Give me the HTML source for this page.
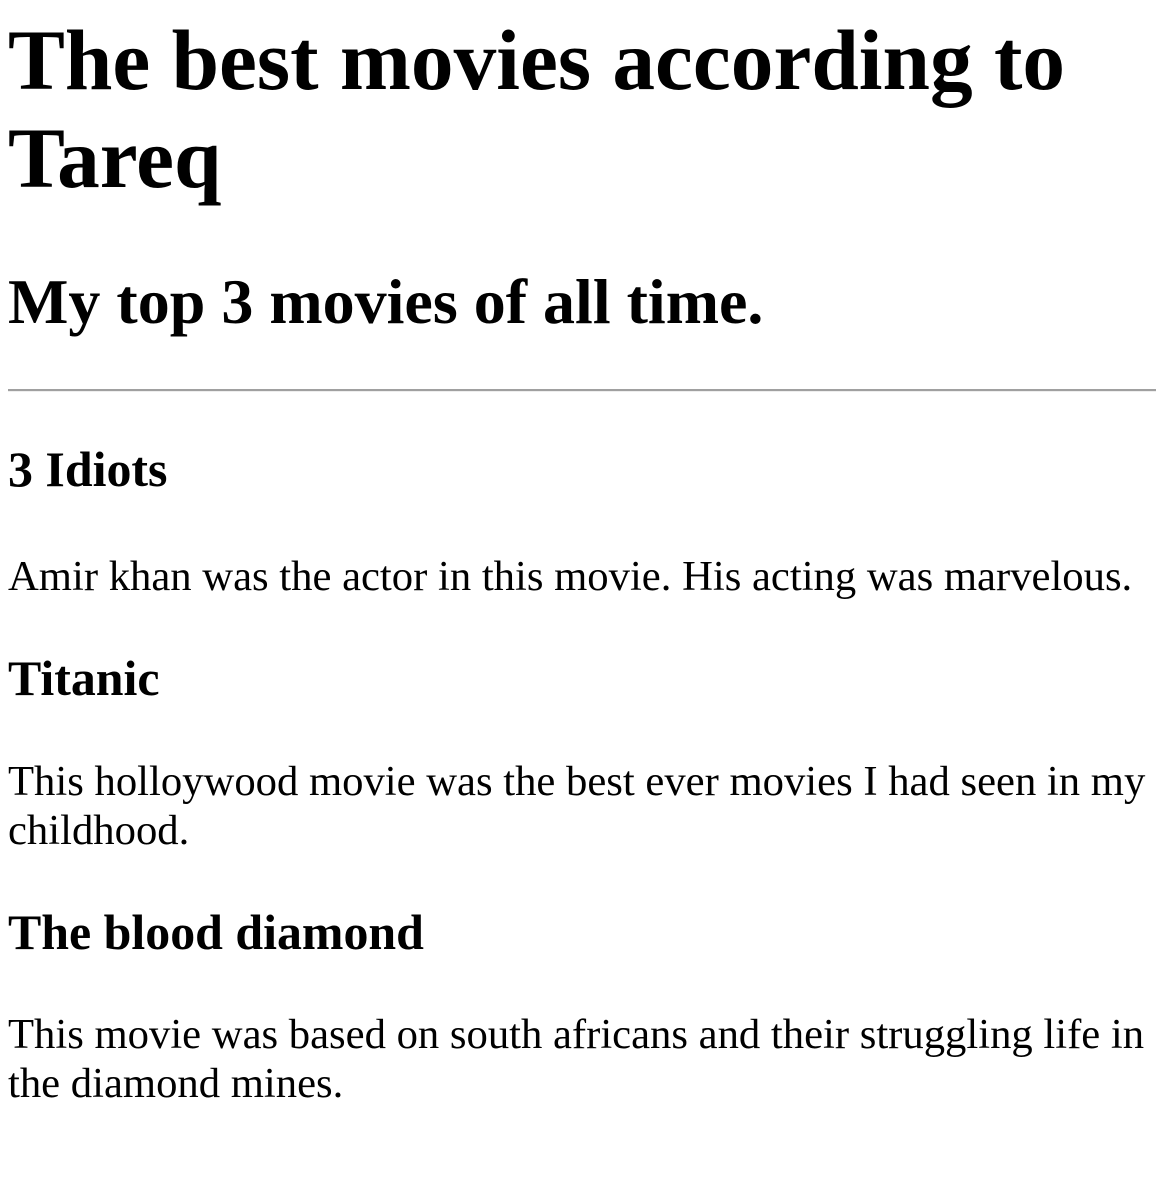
<!DOCTYPE html>
<html><head><style>
body{margin:12px 8px 8px;font-family:"Liberation Serif",serif;font-size:42.67px;color:#000;background:#fff}
h1{font-size:85.33px;margin:0 0 57px;line-height:1.15}
h2{font-size:64px;margin:53px 0;line-height:1.15}
hr{margin:0 0 0;border:none;border-top:2px solid #a0a0a0;border-bottom:1px solid #eee;margin-top:-3px}
h3{font-size:49.9px;margin:49px 0;line-height:1.15}
h3.first{margin-bottom:54px}
p{margin:42.67px 0;line-height:1.15}
</style></head><body>
<h1>The best movies according to Tareq</h1>
<h2>My top 3 movies of all time.</h2>
<hr>
<h3 class="first">3 Idiots</h3>
<p>Amir khan was the actor in this movie. His acting was marvelous.</p>
<h3>Titanic</h3>
<p>This holloywood movie was the best ever movies I had seen in my childhood.</p>
<h3>The blood diamond</h3>
<p>This movie was based on south africans and their struggling life in the diamond mines.</p>
</body></html>
